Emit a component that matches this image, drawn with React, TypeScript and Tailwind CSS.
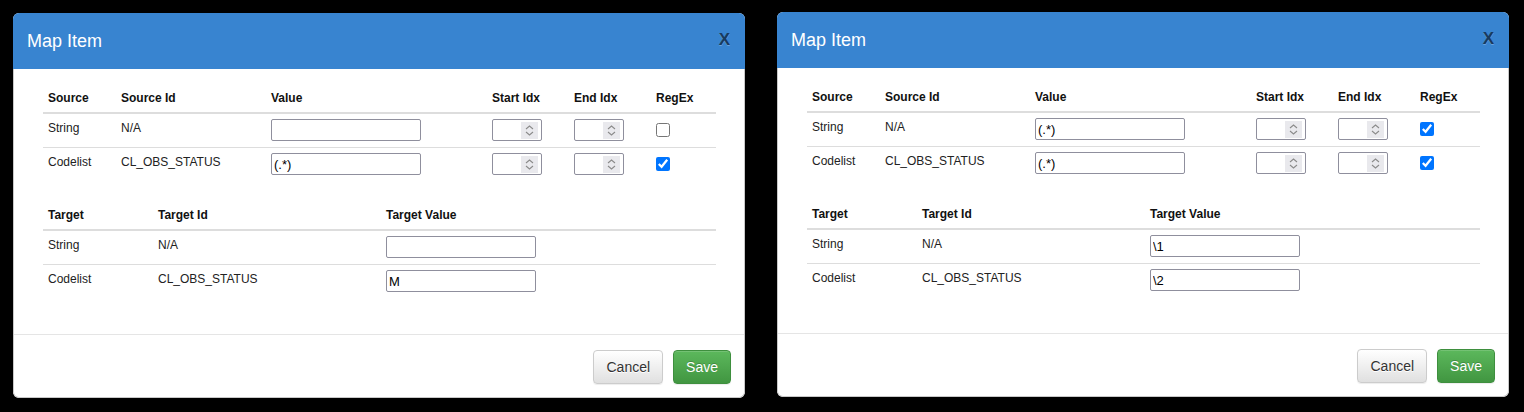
import React from 'react';

interface SourceRow {
    kind: string;
    id: string;
    value: string;
    regex: boolean;
}

interface TargetRow {
    kind: string;
    id: string;
    value: string;
}

interface MapItemModalProps {
    sources: SourceRow[];
    targets: TargetRow[];
    className?: string;
}

const FONT = "font-['Liberation_Sans',Arial,sans-serif]";

const TextBox = ({ value }: { value: string }) => (
    <input
        type="text"
        defaultValue={value}
        readOnly
        className="block h-[22px] w-[150px] rounded-[2px] border border-[#8f8f9d] bg-white px-[2px] text-[13px] text-black outline-none"
    />
);

// number box with the native-looking spinner drawn in
const NumBox = () => (
    <div className="flex h-[22px] w-[50px] items-center justify-end rounded-[2px] border border-[#8f8f9d] bg-white pr-[3px]">
        <div className="flex h-[17px] w-[17px] items-center justify-center bg-[#e9e9ed]">
            <svg width="17" height="17" viewBox="0 0 17 17" fill="none">
                <path d="M5 7L8.5 4L12 7" stroke="#8b8b8b" strokeWidth="1.1" />
                <path d="M5 10L8.5 13L12 10" stroke="#8b8b8b" strokeWidth="1.1" />
            </svg>
        </div>
    </div>
);

const th = 'h-[30px] border-b-2 border-[#dddddd] px-[5px] text-left align-middle text-[12px] font-bold text-[#111]';
const td = 'px-[5px] pt-[5px] pb-[6px] align-top text-[12px] leading-[18px] text-[#222]';

const MapItemModal: React.FC<MapItemModalProps> = ({ sources, targets, className }) => (
    <div className={`w-[732px] shrink-0 overflow-hidden rounded-[6px] bg-white ${className ?? ''}`}>
        <div className="flex h-[56px] items-center justify-between bg-[#3884d0] pl-[14px] pr-[15px]">
            <h4 className="text-[18px] text-white">Map Item</h4>
            <button className="-mt-[4px] text-[17px] leading-none font-bold text-[#183a5e] [text-shadow:0_1px_0_rgba(255,255,255,0.25)]">X</button>
        </div>

        <div className="rounded-b-[6px] border-x border-b border-[#c8c8c8]">
            <div className="pl-[29px] pr-[28px] pt-[15px] pb-[36px]">
                <table className="mb-[20px] w-[673px] table-fixed border-separate border-spacing-0">
                    <colgroup>
                        <col className="w-[73px]" />
                        <col className="w-[150px]" />
                        <col className="w-[221px]" />
                        <col className="w-[82px]" />
                        <col className="w-[82px]" />
                        <col className="w-[65px]" />
                    </colgroup>
                    <thead>
                        <tr>
                            <th className={th}>Source</th>
                            <th className={th}>Source Id</th>
                            <th className={th}>Value</th>
                            <th className={th}>Start Idx</th>
                            <th className={th}>End Idx</th>
                            <th className={th}>RegEx</th>
                        </tr>
                    </thead>
                    <tbody>
                        {sources.map((row, i) => {
                            const cell = `${td} ${i > 0 ? 'border-t border-[#dddddd]' : ''}`;
                            return (
                                <tr key={row.kind}>
                                    <td className={cell}>{row.kind}</td>
                                    <td className={cell}>{row.id}</td>
                                    <td className={cell}><TextBox value={row.value} /></td>
                                    <td className={cell}><NumBox /></td>
                                    <td className={cell}><NumBox /></td>
                                    <td className={cell}>
                                        <input type="checkbox" defaultChecked={row.regex} className="m-0 mt-[4px] block h-[14px] w-[14px]" />
                                    </td>
                                </tr>
                            );
                        })}
                    </tbody>
                </table>

                <table className="w-[673px] table-fixed border-separate border-spacing-0">
                    <colgroup>
                        <col className="w-[110px]" />
                        <col className="w-[228px]" />
                        <col className="w-[335px]" />
                    </colgroup>
                    <thead>
                        <tr>
                            <th className={th}>Target</th>
                            <th className={th}>Target Id</th>
                            <th className={th}>Target Value</th>
                        </tr>
                    </thead>
                    <tbody>
                        {targets.map((row, i) => {
                            const cell = `${td} ${i > 0 ? 'border-t border-[#dddddd]' : ''}`;
                            return (
                                <tr key={row.kind}>
                                    <td className={cell}>{row.kind}</td>
                                    <td className={cell}>{row.id}</td>
                                    <td className={cell}><TextBox value={row.value} /></td>
                                </tr>
                            );
                        })}
                    </tbody>
                </table>
            </div>

            <div className="flex justify-end gap-[10px] border-t border-[#e5e5e5] pr-[13px] pt-[15px] pb-[13px]">
                <button className="h-[34px] rounded-[4px] border border-[#cccccc] bg-linear-to-b from-white to-[#e0e0e0] px-[12px] text-[14px] text-[#333] shadow-[inset_0_1px_0_rgba(255,255,255,0.15),0_1px_1px_rgba(0,0,0,0.075)] [text-shadow:0_1px_0_#fff]">
                    Cancel
                </button>
                <button className="h-[34px] rounded-[4px] border border-[#3e8f3e] bg-linear-to-b from-[#5cb85c] to-[#419641] px-[12px] text-[14px] text-white shadow-[inset_0_1px_0_rgba(255,255,255,0.15),0_1px_1px_rgba(0,0,0,0.075)] [text-shadow:0_-1px_0_rgba(0,0,0,0.2)]">
                    Save
                </button>
            </div>
        </div>
    </div>
);

export default function App() {
    return (
        <div className={`flex h-[412px] w-[1524px] items-start gap-[32px] overflow-hidden bg-black pl-[13px] ${FONT}`}>
            <MapItemModal
                className="mt-[13px]"
                sources={[
                    { kind: 'String', id: 'N/A', value: '', regex: false },
                    { kind: 'Codelist', id: 'CL_OBS_STATUS', value: '(.*)', regex: true },
                ]}
                targets={[
                    { kind: 'String', id: 'N/A', value: '' },
                    { kind: 'Codelist', id: 'CL_OBS_STATUS', value: 'M' },
                ]}
            />
            <MapItemModal
                className="mt-[12px]"
                sources={[
                    { kind: 'String', id: 'N/A', value: '(.*)', regex: true },
                    { kind: 'Codelist', id: 'CL_OBS_STATUS', value: '(.*)', regex: true },
                ]}
                targets={[
                    { kind: 'String', id: 'N/A', value: '\\1' },
                    { kind: 'Codelist', id: 'CL_OBS_STATUS', value: '\\2' },
                ]}
            />
        </div>
    );
}
